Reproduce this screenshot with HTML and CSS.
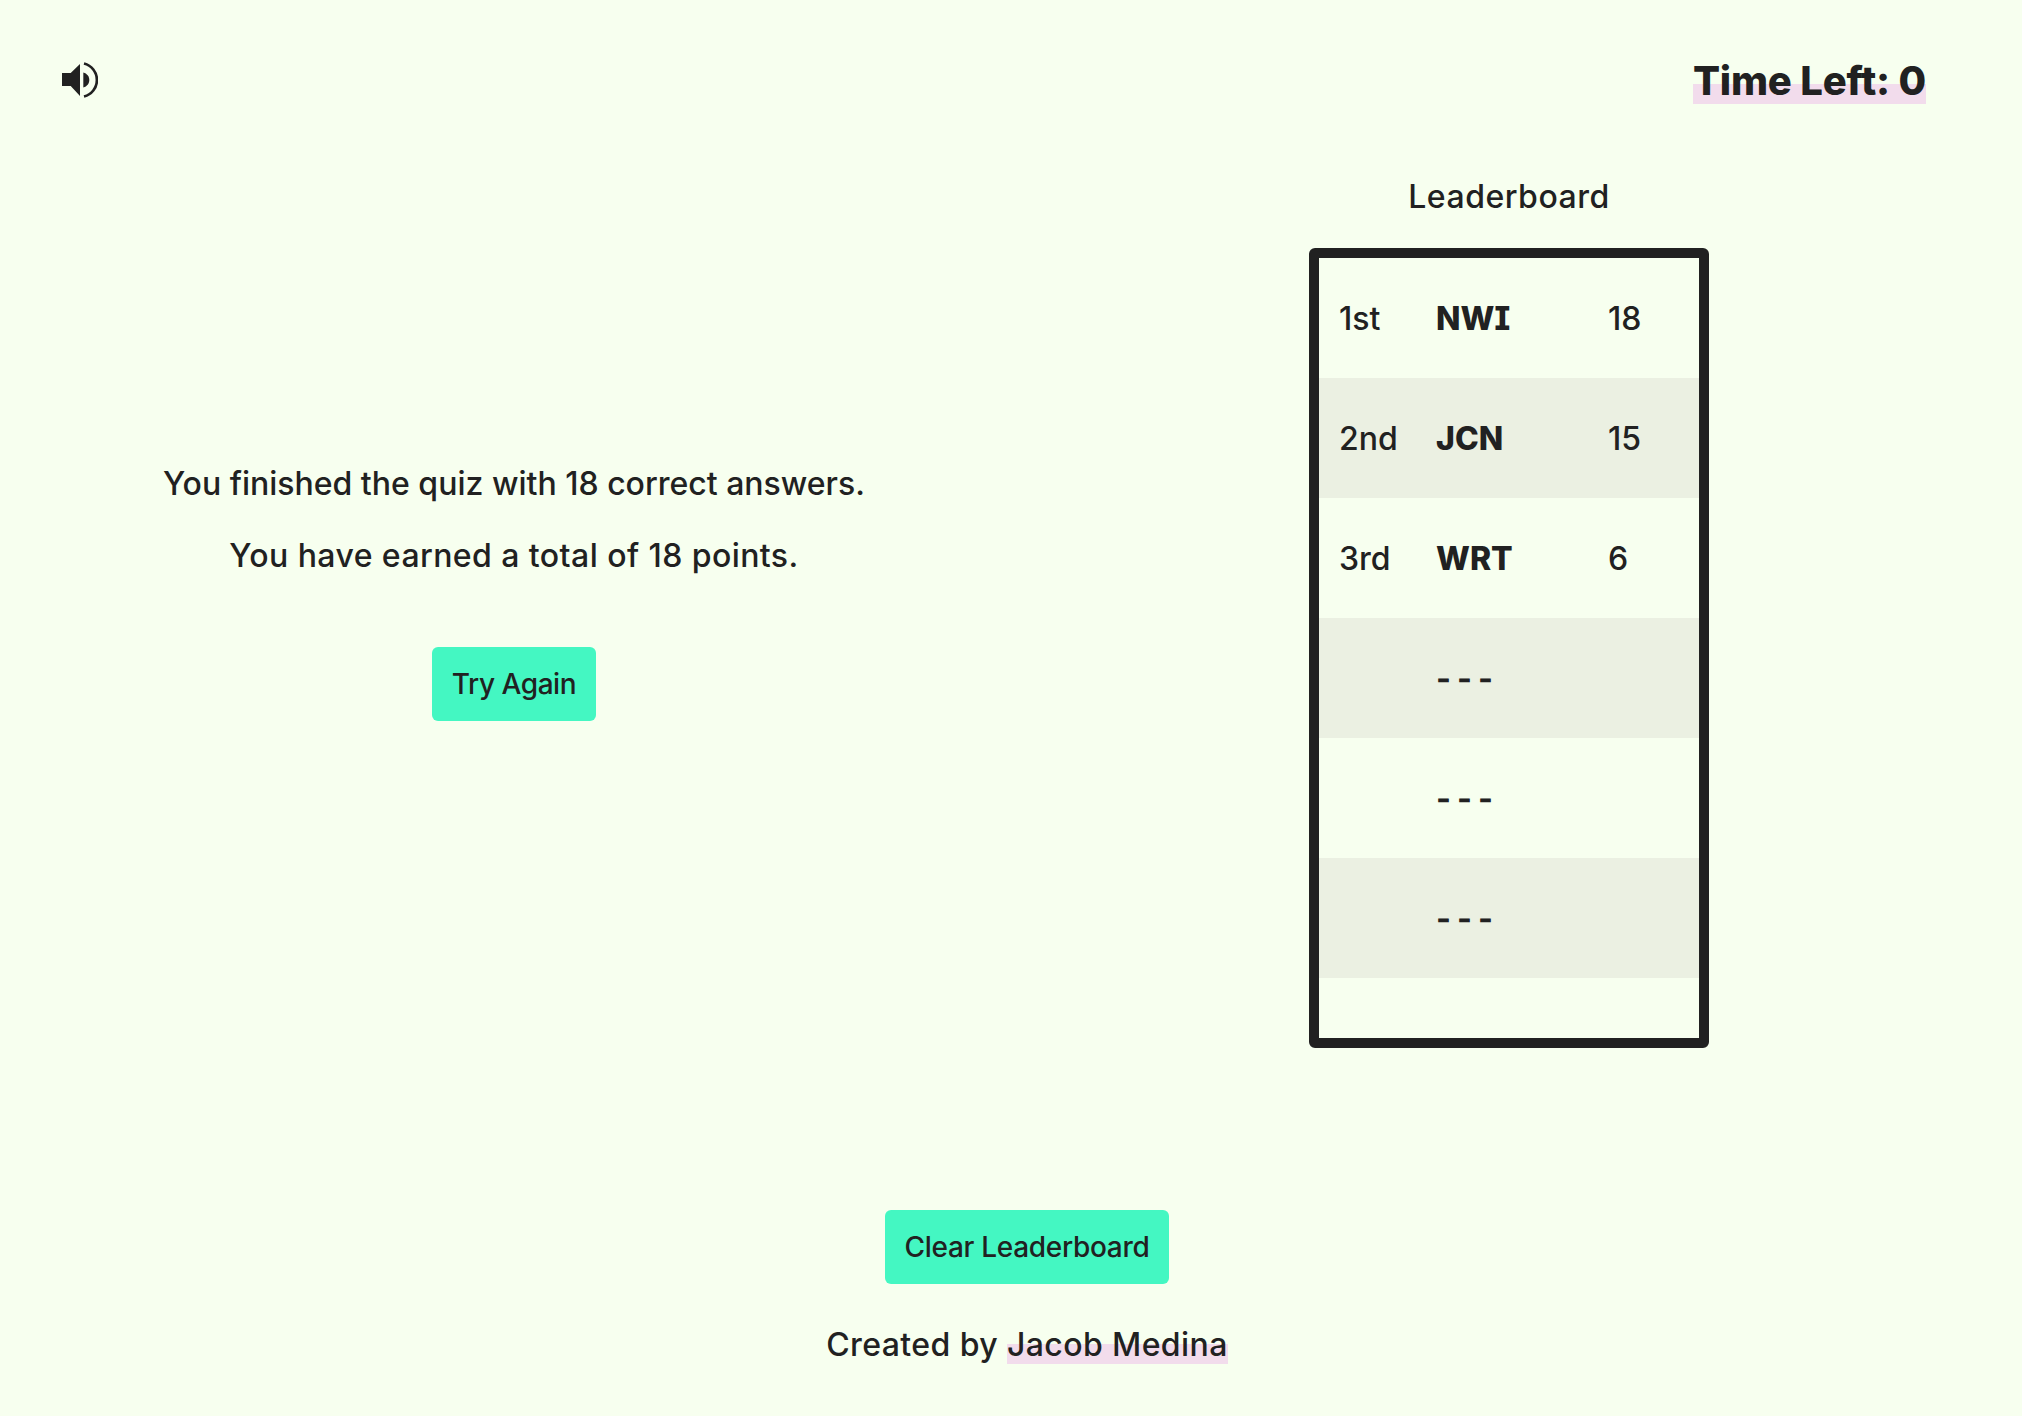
FILE: index.html
```html
<!doctype html>
<html lang="en">
  <head>
    <title>Quiz Results</title>
    <link rel="stylesheet" href="styles.css">
  </head>
  <body>
    <header class="top-bar">
      <button class="sound-btn" type="button" aria-label="Toggle sound">
        <svg width="36" height="36" viewBox="0 0 36 36">
          <path d="M0 11H8.7L18 2V34L8.7 24H0Z" fill="#212121"/>
          <path d="M21.3 10.5C25 11.5 27.3 14.5 27.3 18C27.3 21.5 25 24.5 21.3 25.5Z" fill="#212121"/>
          <path d="M22 1.5A17 17 0 0 1 22 34.5" fill="none" stroke="#212121" stroke-width="2.7"/>
        </svg>
      </button>
      <div class="time-left"><span class="marker">Time Left: 0</span></div>
    </header>
    <main class="results">
      <section class="summary">
        <p class="summary-line finished">You finished the quiz with 18 correct answers.</p>
        <p class="summary-line earned">You have earned a total of 18 points.</p>
        <button class="action-btn try-again" type="button">Try Again</button>
      </section>
      <section class="leaderboard">
        <h2 class="leaderboard-title">Leaderboard</h2>
        <div class="board">
          <table class="board-table">
            <tbody>
              <tr><td class="rank">1st</td><td class="name">NWI</td><td class="score">18</td></tr>
              <tr><td class="rank">2nd</td><td class="name">JCN</td><td class="score">15</td></tr>
              <tr><td class="rank">3rd</td><td class="name">WRT</td><td class="score">6</td></tr>
              <tr><td class="rank"></td><td class="empty">- - -</td><td></td></tr>
              <tr><td class="rank"></td><td class="empty">- - -</td><td></td></tr>
              <tr><td class="rank"></td><td class="empty">- - -</td><td></td></tr>
            </tbody>
          </table>
        </div>
      </section>
    </main>
    <footer class="page-footer">
      <button class="action-btn clear" type="button">Clear Leaderboard</button>
      <p class="credit">Created by <a class="marker credit-link" href="#">Jacob Medina</a></p>
    </footer>
  </body>
</html>
```

FILE: styles.css
```css
body {
  font-family: Inter, "Noto Sans", sans-serif;
  font-size: 32px;
  line-height: 40px;
  font-weight: 450;
  background-color: #f7ffef;
  color: #212121;
  margin: 0;
  padding: 0;
}

.marker {
  display: inline-block;
  background: linear-gradient(transparent 50%, #f2dcec 50%);
}

.top-bar {
  display: flex;
  justify-content: space-between;
  align-items: flex-start;
  padding: 62px 96px 0 62px;
}

.sound-btn {
  width: 36px;
  height: 36px;
  padding: 0;
  border: none;
  background: none;
  display: block;
}

.time-left {
  font-size: 40px;
  font-weight: 800;
  letter-spacing: -0.2px;
  margin-top: 2px;
}

.time-left .marker {
  display: block;
  line-height: 34px;
  padding-bottom: 6px;
}

.results {
  display: grid;
  grid-template-columns: 1028px 962px;
  padding-top: 73px;
}

.summary {
  display: flex;
  flex-direction: column;
  align-items: center;
  justify-content: center;
  padding-bottom: 41px;
}

.summary-line {
  margin: 0 0 32px;
}

.earned {
  letter-spacing: 0.43px;
}

.action-btn {
  font-family: inherit;
  font-size: 28px;
  line-height: 34px;
  font-weight: 450;
  color: #212121;
  background-color: #44f7c2;
  border: none;
  border-radius: 6px;
  padding: 20px;
}

.try-again {
  margin-top: 39px;
  letter-spacing: -0.45px;
}

.clear {
  letter-spacing: -0.3px;
}

.leaderboard {
  display: flex;
  flex-direction: column;
  align-items: center;
}

.leaderboard-title {
  font-size: 32px;
  font-weight: 450;
  letter-spacing: 0.5px;
  margin: 0 0 31px;
}

.board {
  box-sizing: border-box;
  width: 400px;
  height: 800px;
  border: 10px solid #212121;
  border-radius: 6px;
}

.board-table {
  width: 100%;
  border-collapse: collapse;
  table-layout: fixed;
}

.board-table td {
  height: 120px;
  padding: 2px 0 0;
  box-sizing: border-box;
}

.board-table tr:nth-child(even) {
  background-color: #ebf0e2;
}

.board-table .rank {
  width: 117px;
  padding-left: 20px;
}

.name {
  width: 171px;
  font-weight: 800;
  font-feature-settings: "cv08";
}

.board-table .score {
  padding-left: 1px;
}

.empty {
  width: 171px;
  font-weight: 700;
  word-spacing: -1.5px;
  text-rendering: geometricPrecision;
}

.page-footer {
  display: flex;
  flex-direction: column;
  align-items: center;
  padding-left: 32px;
  padding-top: 162px;
}

.credit {
  margin: 40px 0 0;
  letter-spacing: 0.4px;
}

.credit-link {
  color: inherit;
  text-decoration: none;
  line-height: 38px;
  padding-top: 2px;
}
```
